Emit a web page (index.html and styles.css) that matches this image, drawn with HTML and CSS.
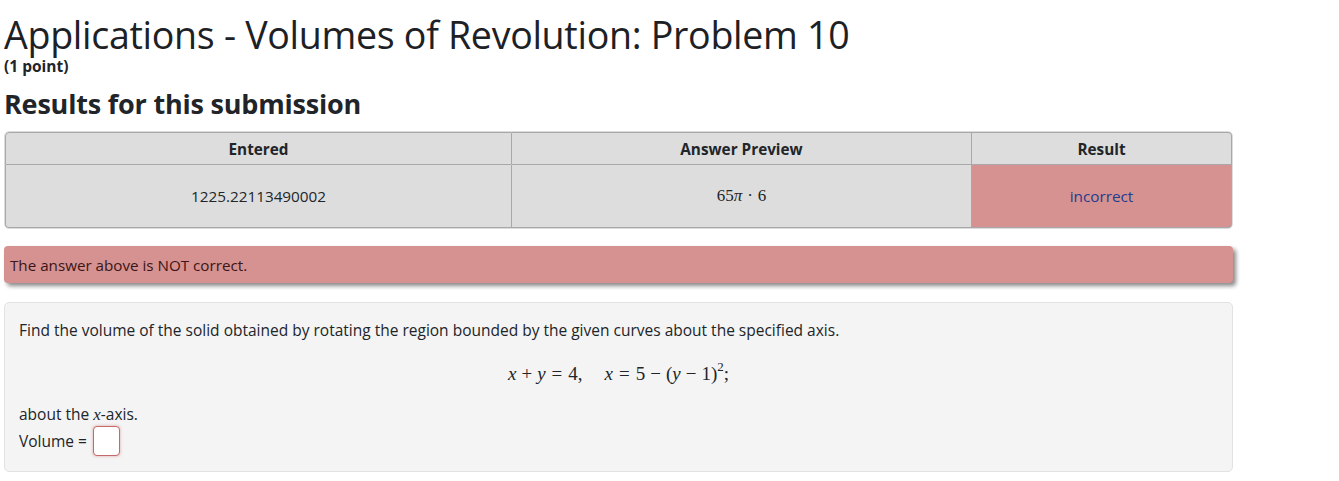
FILE: index.html
```html
<!DOCTYPE html>
<html>
<head>
<meta charset="utf-8">
<link rel="stylesheet" href="styles.css">
</head>
<body>
<div class="page">
  <h1 class="title">Applications - Volumes of Revolution: Problem 10</h1>
  <div class="points">(1 point)</div>
  <h2 class="results-title">Results for this submission</h2>
  <div class="table-wrap">
    <table class="results">
      <thead>
        <tr>
          <th class="col-entered">Entered</th>
          <th class="col-preview">Answer Preview</th>
          <th class="col-result">Result</th>
        </tr>
      </thead>
      <tbody>
        <tr>
          <td>1225.22113490002</td>
          <td class="math preview">65<i>π</i><span class="op-thin">·</span>6</td>
          <td class="incorrect">incorrect</td>
        </tr>
      </tbody>
    </table>
  </div>
  <div class="alert">The answer above is NOT correct.</div>
  <div class="problem">
    <p class="problem-text">Find the volume of the solid obtained by rotating the region bounded by the given curves about the specified axis.</p>
    <div class="display-math math"><i>x</i><span class="op">+</span><i>y</i><span class="rel">=</span>4,<span class="qquad"></span><i>x</i><span class="rel">=</span>5<span class="op">−</span>(<i>y</i><span class="op">−</span>1)<sup>2</sup>;</div>
    <p class="problem-text axis">about the <i class="math">x</i>-axis.</p>
    <div class="answer-line">
      <label class="answer-label">Volume =</label>
      <input class="answer-input" type="text">
    </div>
  </div>
</div>
</body>
</html>
```

FILE: styles.css
```css
html, body {
  margin: 0;
  padding: 0;
  background: #ffffff;
}
body {
  font-family: "Open Sans", "Noto Sans", sans-serif;
  color: #212529;
  font-size: 15px;
}
.page {
  width: 1229px;
  padding: 0 4px;
}
.title {
  font-size: 37.6px;
  font-weight: 400;
  line-height: 42px;
  margin: 14px 0 0 0;
  letter-spacing: -0.3px;
  color: #1d2125;
}
.points {
  font-size: 15.5px;
  font-weight: 700;
  line-height: 18px;
  margin-top: 1px;
}
.results-title {
  font-size: 27px;
  font-weight: 700;
  line-height: 32px;
  margin: 13px 0 11px 0;
  letter-spacing: -0.2px;
}
.table-wrap {
  border: 1px solid #dcdcdc;
  border-radius: 5px;
  padding: 0;
}
.results {
  width: 100%;
  border-collapse: separate;
  border-spacing: 0;
  font-size: 15.3px;
}
.results th, .results td {
  background: #dddddd;
  border: 1px solid #a8a8a8;
  text-align: center;
}
.results th {
  font-weight: 700;
  height: 31px;
  padding: 0;
}
.results td {
  height: 62px;
  padding: 0;
  border-top: 0;
}
.results th + th, .results td + td {
  border-left: 0;
}
.results thead th:first-child { border-top-left-radius: 4px; }
.results thead th:last-child { border-top-right-radius: 4px; }
.results tbody td:first-child { border-bottom-left-radius: 4px; }
.results tbody td:last-child { border-bottom-right-radius: 4px; }
.col-entered { width: 505px; }
.col-preview { width: 459px; }
.results td.incorrect {
  background: #d69191;
  color: #1e3d8f;
}
.math {
  font-family: "Liberation Serif", "DejaVu Serif", serif;
}
.math i, i.math {
  font-style: italic;
}
.results td.preview {
  font-size: 17px;
}
.op-thin {
  display: inline-block;
  margin: 0 5px;
}
.alert {
  margin-top: 17px;
  background: #d69191;
  border-radius: 4px;
  height: 37px;
  line-height: 38px;
  padding: 0 6px;
  font-size: 15.2px;
  color: #3a1616;
  box-shadow: 3px 3px 4px #8a8a8a;
}
.problem {
  margin-top: 19px;
  background: #f4f4f4;
  border: 1px solid #e2e2e2;
  border-radius: 5px;
  padding: 17px 14px 15px 14px;
  font-size: 15.5px;
}
.problem-text {
  margin: 0;
  line-height: 20px;
}
.display-math {
  text-align: center;
  margin: 22px 0 18px 0;
  line-height: 24px;
  font-size: 19px;
}
.display-math sup {
  font-size: 13px;
  line-height: 0;
  vertical-align: 9px;
}
.op {
  display: inline-block;
  margin: 0 5px;
}
.rel {
  display: inline-block;
  margin: 0 6px;
}
.qquad {
  display: inline-block;
  width: 22px;
}
.axis .math {
  font-size: 17px;
}
.answer-line {
  display: flex;
  align-items: center;
  gap: 6px;
  margin-top: 1px;
}
.answer-input {
  width: 27px;
  height: 30px;
  box-sizing: border-box;
  padding: 0;
  border: 1px solid #c46a6a;
  border-radius: 4px;
  background: #ffffff;
  box-shadow: 0 0 3px rgba(200, 80, 80, 0.5);
}
```
